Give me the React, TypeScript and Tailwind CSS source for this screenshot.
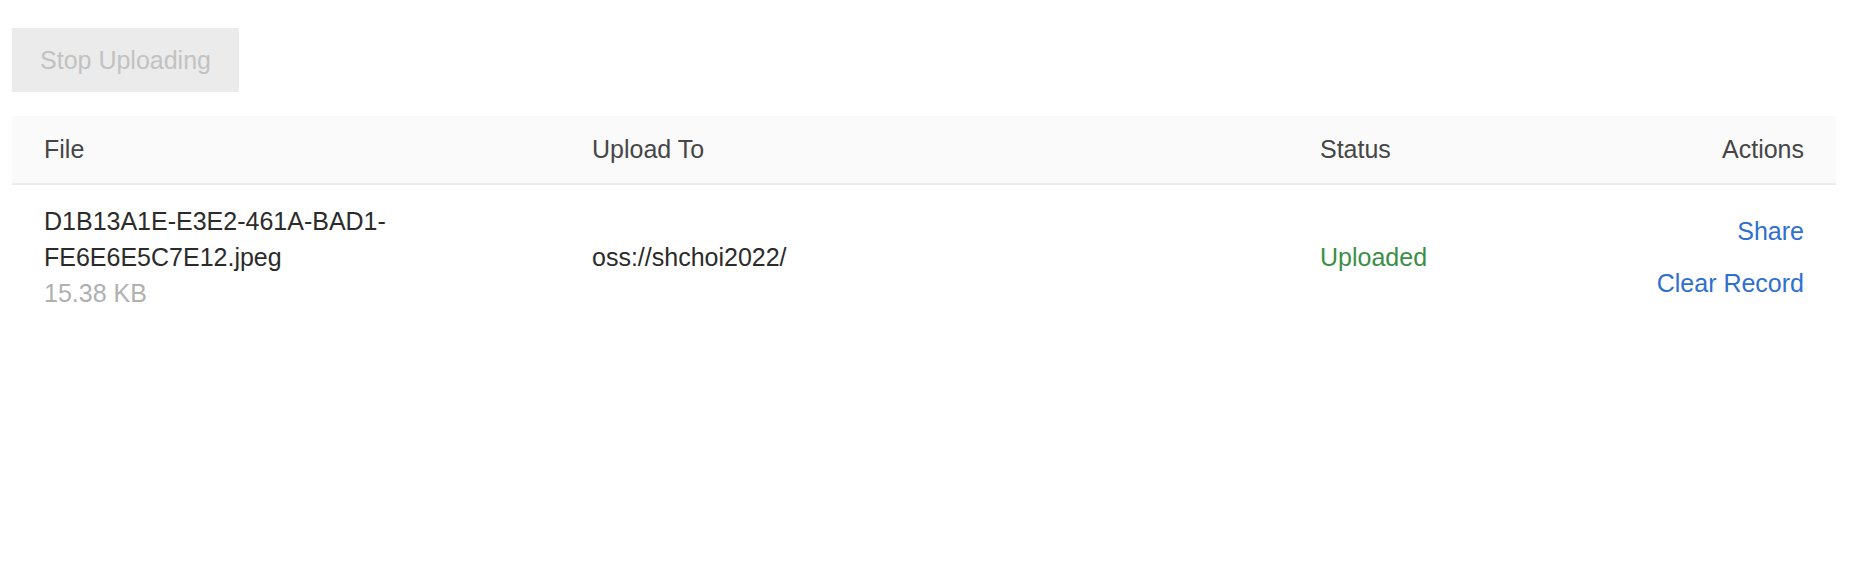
export default function App() {
  return (
    <div className="min-h-screen bg-white p-3 pt-7 text-[25px] font-['Liberation_Sans',Arial,sans-serif]">
      <button
        disabled
        className="h-16 w-[227px] bg-[#ebebeb] text-[#c2c2c2] text-[25px] leading-none"
      >
        Stop Uploading
      </button>

      <div className="mt-6 w-[1824px]">
        <div className="grid grid-cols-[548px_728px_1fr_auto] items-center h-[69px] bg-[#fafafa] border-b-2 border-[#ebebeb] text-[#464646]">
          <div className="pl-[32px]">File</div>
          <div className="pl-[32px]">Upload To</div>
          <div className="pl-[32px]">Status</div>
          <div className="pr-[32px] text-right">Actions</div>
        </div>

        <div className="grid grid-cols-[548px_728px_1fr_auto] items-center py-[18px] leading-[36px]">
          <div className="pl-[32px] text-[#2b2b2b]">
            <div>D1B13A1E-E3E2-461A-BAD1-</div>
            <div>FE6E6E5C7E12.jpeg</div>
            <div className="text-[#b0b0b0]">15.38 KB</div>
          </div>
          <div className="pl-[32px] text-[#2b2b2b]">oss://shchoi2022/</div>
          <div className="pl-[32px] text-[#3c8f45]">Uploaded</div>
          <div className="pr-[32px] flex flex-col items-end gap-4 text-[#2f6fce]">
            <a href="#" className="hover:underline">Share</a>
            <a href="#" className="hover:underline">Clear Record</a>
          </div>
        </div>
      </div>
    </div>
  );
}
